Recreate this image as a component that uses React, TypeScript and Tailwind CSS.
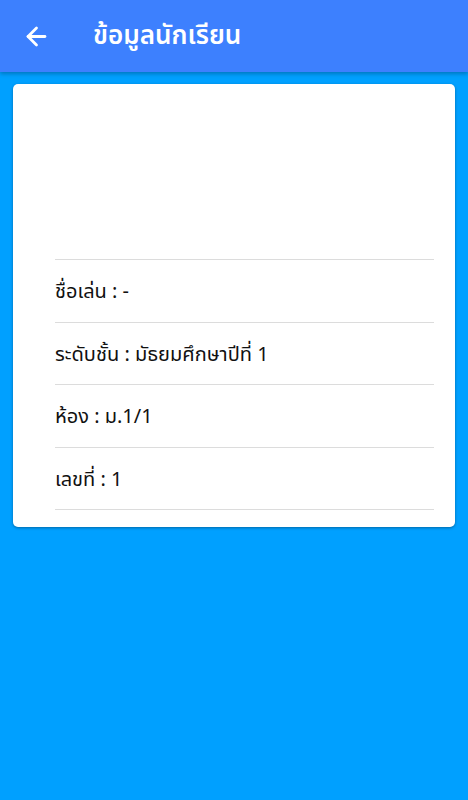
import { ArrowLeft } from "lucide-react";

const ROWS = [
  "ชื่อเล่น : -",
  "ระดับชั้น : มัธยมศึกษาปีที่ 1",
  "ห้อง : ม.1/1",
  "เลขที่ : 1",
];

export default function App() {
  return (
    <div
      className="min-h-[800px] w-full bg-[#00a0ff]"
      style={{ fontFamily: '"Noto Sans Thai", "Noto Sans Thai UI", "Noto Sans", "DejaVu Sans", sans-serif' }}
    >
      <header className="relative z-10 flex h-[72px] items-center bg-[#3d80fe] shadow-[0_2px_4px_rgba(0,0,0,0.25)]">
        <div className="flex w-[93px] justify-start pl-[22px]">
          <ArrowLeft className="h-[29px] w-[29px] text-white" strokeWidth={2.3} />
        </div>
        <h1 className="text-[26px] font-semibold text-white">ข้อมูลนักเรียน</h1>
      </header>

      <div className="px-[13px] pt-[12px]">
        <div className="rounded-[5px] bg-white pl-[42px] pr-[21px] pb-[17px] shadow-[0_1px_3px_rgba(0,0,0,0.35)]">
          <div className="h-[175px]" />
          <div className="border-t border-[#dcdcdc]">
            {ROWS.map((row) => (
              <div
                key={row}
                className="flex h-[62.5px] items-center border-b border-[#dcdcdc] pt-[3px] text-[20px] text-[#111]"
              >
                {row}
              </div>
            ))}
          </div>
        </div>
      </div>
    </div>
  );
}
